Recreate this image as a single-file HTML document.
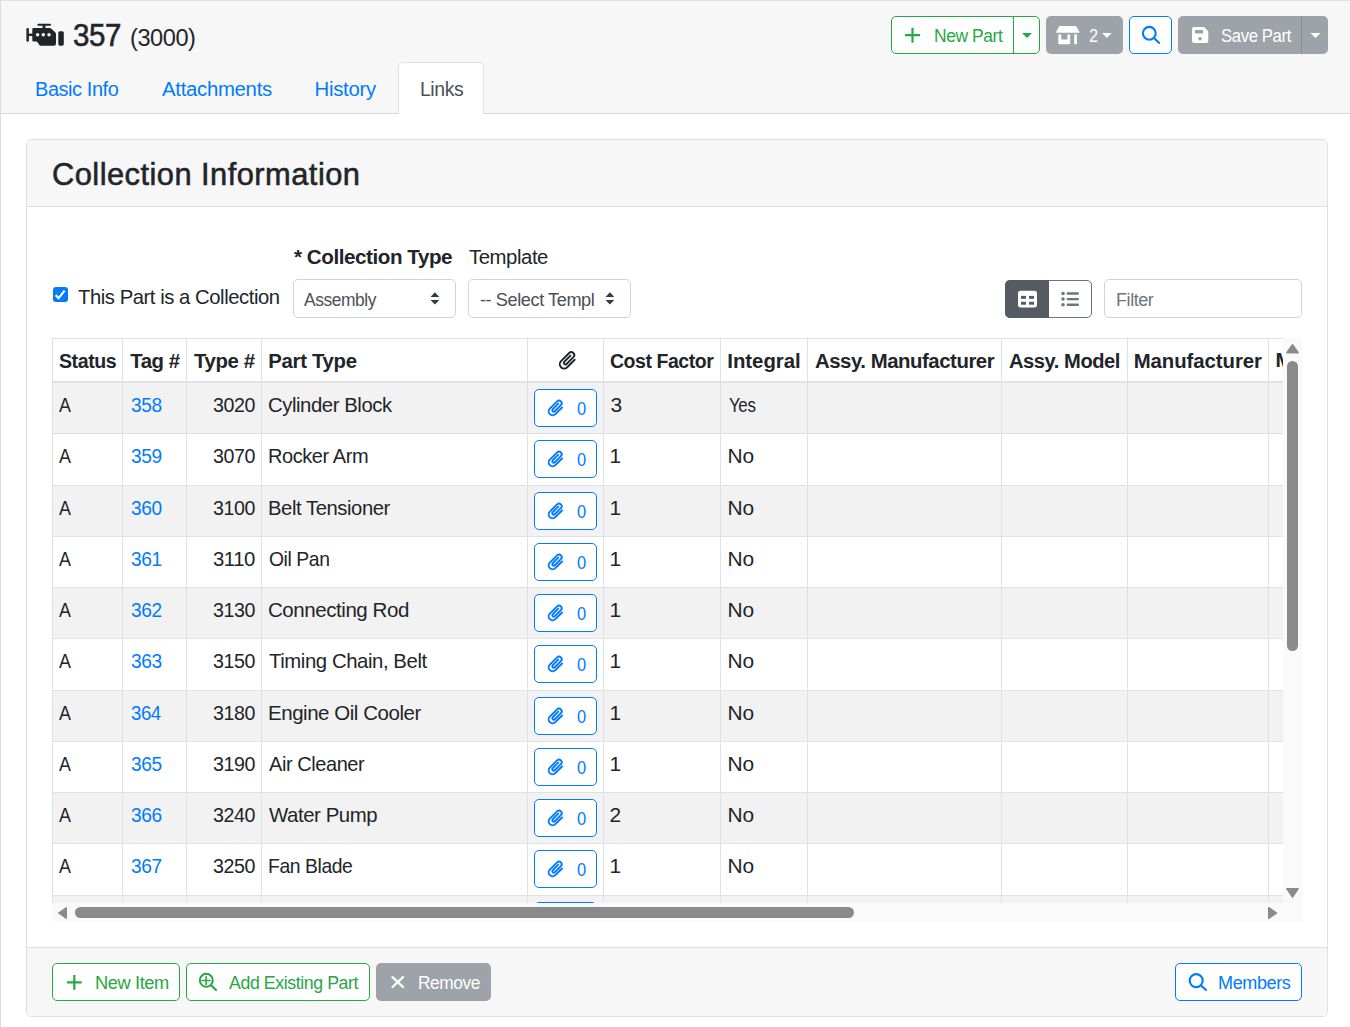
<!DOCTYPE html>
<html><head><meta charset="utf-8"><title>Links</title>
<style>
html,body{margin:0;padding:0}
body{width:1350px;height:1027px;position:relative;overflow:hidden;background:#fff;font-family:"Liberation Sans",sans-serif;color:#212529}
.a{position:absolute;box-sizing:border-box}
.t{position:absolute;white-space:pre;font-family:"Liberation Sans",sans-serif;transform-origin:0 0}
svg.a{overflow:visible}
</style></head><body>
<div class="a" style="left:0px;top:0px;width:1350px;height:114px;background:#f7f7f7"></div>
<div class="a" style="left:0px;top:0px;width:1350px;height:1px;background:#dee2e6"></div>
<div class="a" style="left:0px;top:0px;width:1px;height:1027px;background:#dcdde0"></div>
<div class="a" style="left:1px;top:113px;width:1349px;height:1px;background:#d8d8d8"></div>
<div class="a" style="left:398px;top:62px;width:86px;height:52px;background:#fff;border:1px solid #dee2e6;border-bottom:0;border-radius:5px 5px 0 0"></div>
<div class="a" style="left:891px;top:16px;width:149px;height:38px;background:#fff;border:1px solid #28a745;border-radius:5px"></div>
<div class="a" style="left:1013px;top:16px;width:1px;height:38px;background:#28a745"></div>
<div class="a" style="left:1046px;top:16px;width:77px;height:38px;background:#9da3a9;border-radius:5px"></div>
<div class="a" style="left:1129px;top:16px;width:43px;height:38px;background:#fff;border:1px solid #007bff;border-radius:5px"></div>
<div class="a" style="left:1178px;top:16px;width:150px;height:38px;background:#9da3a9;border-radius:5px"></div>
<div class="a" style="left:1301px;top:16px;width:1px;height:38px;background:#868c93"></div>
<div class="a" style="left:26px;top:139px;width:1302px;height:878px;background:#fff;border:1px solid #dfdfdf;border-radius:5px"></div>
<div class="a" style="left:27px;top:140px;width:1300px;height:66px;background:#f7f7f7;border-radius:4px 4px 0 0"></div>
<div class="a" style="left:27px;top:206px;width:1300px;height:1px;background:#dfdfdf"></div>
<div class="a" style="left:27px;top:947px;width:1300px;height:1px;background:#dfdfdf"></div>
<div class="a" style="left:27px;top:948px;width:1300px;height:68px;background:#f7f7f7;border-radius:0 0 4px 4px"></div>
<div class="a" style="left:53px;top:287px;width:15px;height:15px;background:#007bff;border-radius:3px"></div>
<div class="a" style="left:293px;top:279px;width:163px;height:39px;background:#fff;border:1px solid #ced4da;border-radius:5px"></div>
<div class="a" style="left:468px;top:279px;width:163px;height:39px;background:#fff;border:1px solid #ced4da;border-radius:5px"></div>
<div class="a" style="left:1005px;top:280px;width:87px;height:38px;background:#fff;border:1px solid #6c757d;border-radius:5px"></div>
<div class="a" style="left:1005px;top:280px;width:44px;height:38px;background:#545b62;border-radius:5px 0 0 5px"></div>
<div class="a" style="left:1104px;top:279px;width:198px;height:39px;background:#fff;border:1px solid #ced4da;border-radius:5px"></div>
<div class="a" style="left:53px;top:383px;width:1230px;height:50px;background:#f2f2f2"></div>
<div class="a" style="left:53px;top:486px;width:1230px;height:50px;background:#f2f2f2"></div>
<div class="a" style="left:53px;top:588px;width:1230px;height:50px;background:#f2f2f2"></div>
<div class="a" style="left:53px;top:691px;width:1230px;height:50px;background:#f2f2f2"></div>
<div class="a" style="left:53px;top:793px;width:1230px;height:50px;background:#f2f2f2"></div>
<div class="a" style="left:53px;top:896px;width:1230px;height:7px;background:#f2f2f2"></div>
<div class="a" style="left:52px;top:338px;width:1231px;height:1px;background:#dee2e6"></div>
<div class="a" style="left:52px;top:381px;width:1231px;height:2px;background:#dee2e6"></div>
<div class="a" style="left:52px;top:433px;width:1231px;height:1px;background:#dee2e6"></div>
<div class="a" style="left:52px;top:485px;width:1231px;height:1px;background:#dee2e6"></div>
<div class="a" style="left:52px;top:536px;width:1231px;height:1px;background:#dee2e6"></div>
<div class="a" style="left:52px;top:587px;width:1231px;height:1px;background:#dee2e6"></div>
<div class="a" style="left:52px;top:638px;width:1231px;height:1px;background:#dee2e6"></div>
<div class="a" style="left:52px;top:690px;width:1231px;height:1px;background:#dee2e6"></div>
<div class="a" style="left:52px;top:741px;width:1231px;height:1px;background:#dee2e6"></div>
<div class="a" style="left:52px;top:792px;width:1231px;height:1px;background:#dee2e6"></div>
<div class="a" style="left:52px;top:843px;width:1231px;height:1px;background:#dee2e6"></div>
<div class="a" style="left:52px;top:895px;width:1231px;height:1px;background:#dee2e6"></div>
<div class="a" style="left:52px;top:338px;width:1px;height:565px;background:#dee2e6"></div>
<div class="a" style="left:122px;top:338px;width:1px;height:565px;background:#dee2e6"></div>
<div class="a" style="left:186px;top:338px;width:1px;height:565px;background:#dee2e6"></div>
<div class="a" style="left:261px;top:338px;width:1px;height:565px;background:#dee2e6"></div>
<div class="a" style="left:527px;top:338px;width:1px;height:565px;background:#dee2e6"></div>
<div class="a" style="left:603px;top:338px;width:1px;height:565px;background:#dee2e6"></div>
<div class="a" style="left:720px;top:338px;width:1px;height:565px;background:#dee2e6"></div>
<div class="a" style="left:807px;top:338px;width:1px;height:565px;background:#dee2e6"></div>
<div class="a" style="left:1001px;top:338px;width:1px;height:565px;background:#dee2e6"></div>
<div class="a" style="left:1127px;top:338px;width:1px;height:565px;background:#dee2e6"></div>
<div class="a" style="left:1268px;top:338px;width:1px;height:565px;background:#dee2e6"></div>
<div class="a" style="left:534px;top:389px;width:63px;height:38px;background:#fff;border:1px solid #007bff;border-radius:5px"></div>
<div class="a" style="left:534px;top:440px;width:63px;height:38px;background:#fff;border:1px solid #007bff;border-radius:5px"></div>
<div class="a" style="left:534px;top:492px;width:63px;height:38px;background:#fff;border:1px solid #007bff;border-radius:5px"></div>
<div class="a" style="left:534px;top:543px;width:63px;height:38px;background:#fff;border:1px solid #007bff;border-radius:5px"></div>
<div class="a" style="left:534px;top:594px;width:63px;height:38px;background:#fff;border:1px solid #007bff;border-radius:5px"></div>
<div class="a" style="left:534px;top:645px;width:63px;height:38px;background:#fff;border:1px solid #007bff;border-radius:5px"></div>
<div class="a" style="left:534px;top:697px;width:63px;height:38px;background:#fff;border:1px solid #007bff;border-radius:5px"></div>
<div class="a" style="left:534px;top:748px;width:63px;height:38px;background:#fff;border:1px solid #007bff;border-radius:5px"></div>
<div class="a" style="left:534px;top:799px;width:63px;height:38px;background:#fff;border:1px solid #007bff;border-radius:5px"></div>
<div class="a" style="left:534px;top:850px;width:63px;height:38px;background:#fff;border:1px solid #007bff;border-radius:5px"></div>
<div class="a" style="left:534px;top:902px;width:63px;height:1px;overflow:hidden"><div class="a" style="left:0px;top:0px;width:63px;height:38px;background:#fff;border:1px solid #007bff;border-radius:5px"></div></div>
<div class="a" style="left:1283px;top:338px;width:19px;height:565px;background:#fafafa"></div>
<div class="a" style="left:52px;top:903px;width:1231px;height:19px;background:#fafafa"></div>
<div class="a" style="left:1283px;top:903px;width:19px;height:19px;background:#fafafa"></div>
<div class="a" style="left:1287px;top:361px;width:11px;height:290px;background:#8a8a8a;border-radius:6px"></div>
<div class="a" style="left:75px;top:907px;width:779px;height:11px;background:#8a8a8a;border-radius:6px"></div>
<div class="a" style="left:52px;top:963px;width:128px;height:38px;background:#fff;border:1px solid #28a745;border-radius:5px"></div>
<div class="a" style="left:186px;top:963px;width:184px;height:38px;background:#fff;border:1px solid #28a745;border-radius:5px"></div>
<div class="a" style="left:376px;top:963px;width:115px;height:38px;background:#9da3a9;border-radius:5px"></div>
<div class="a" style="left:1175px;top:963px;width:127px;height:38px;background:#fff;border:1px solid #007bff;border-radius:5px"></div>
<svg class="a" style="left:0;top:0" width="1350" height="1027" viewBox="0 0 1350 1027"><g fill="#212529"><rect x="37.3" y="23.7" width="13.7" height="2" rx="1"/><rect x="42.6" y="25" width="2.9" height="3.5"/><path d="M33.5 28.1 H49.6 Q50.6 28.1 51.4 28.8 L55.2 32.2 Q56 33 56 34.2 V43.5 Q56 45.7 53.8 45.7 H40.4 Q39.8 45.7 39.4 45.1 L36.9 41.5 H33.5 Q32.3 41.5 32.3 40.3 V29.3 Q32.3 28.1 33.5 28.1Z"/><rect x="26.4" y="28" width="2.5" height="13.8" rx="1.2"/><rect x="28" y="33.6" width="5" height="2.4"/><rect x="58.3" y="31.2" width="5.5" height="14.5" rx="1.6"/></g><g fill="#f7f7f7"><circle cx="37.6" cy="34.7" r="1.75"/><circle cx="43.3" cy="34.7" r="1.75"/><circle cx="49" cy="34.7" r="1.75"/></g><g stroke="#28a745" stroke-width="2.2"><path d="M905 35.2H920M912.5 27.7V42.7"/></g><path d="M1022 33H1032L1027 38Z" fill="#28a745"/><g fill="#fff"><path d="M1060 26H1075.2Q1075.9 26 1076.3 26.6L1079.5 32Q1079.8 32.8 1079 32.8H1056.6Q1055.8 32.8 1056.1 32L1059 26.6Q1059.4 26 1060 26Z"/><path d="M1058.3 34.4H1061.3V39.4H1067.4V34.4H1070.2V43.2Q1070.2 44.2 1069.2 44.2H1059.3Q1058.3 44.2 1058.3 43.2Z"/><rect x="1074.2" y="34.4" width="2.8" height="9.8"/><path d="M1102.1 33.1H1111.7L1106.9 37.9Z"/></g><g stroke="#007bff" fill="none" stroke-width="2.1" stroke-linecap="round"><circle cx="1149.3" cy="33.3" r="6.4"/><path d="M1154 38L1159.2 42.9"/></g><path fill="#fff" fill-rule="evenodd" d="M1194 27H1204.1L1208.3 31.2V41.1Q1208.3 43.1 1206.3 43.1H1194Q1192 43.1 1192 41.1V29Q1192 27 1194 27Z M1195 30H1203V33.6H1195Z M1201.8 38.7A1.8 1.8 0 1 0 1198.2 38.7A1.8 1.8 0 1 0 1201.8 38.7Z"/><path d="M1310.5 33H1320.5L1315.5 38Z" fill="#fff"/><path d="M55.6 295.1L58.6 298.1L64.6 290.6" stroke="#fff" stroke-width="2.2" fill="none"/><path fill="#343a40" d="M430.5 297H439.3L434.9 292.3Z M430.5 299.9H439.3L434.9 304.5Z"/><path fill="#343a40" d="M605.5 297H614.3L609.9 292.3Z M605.5 299.9H614.3L609.9 304.5Z"/><rect x="1018" y="290.8" width="19" height="16.6" rx="2.6" fill="#fff"/><g fill="#545b62"><rect x="1021" y="295.9" width="5" height="2.9"/><rect x="1029" y="295.9" width="5" height="2.9"/><rect x="1021" y="301.8" width="5" height="2.9"/><rect x="1029" y="301.8" width="5" height="2.9"/></g><g fill="#6c757d"><circle cx="1063" cy="293.5" r="1.75"/><circle cx="1063" cy="299.1" r="1.75"/><circle cx="1063" cy="304.7" r="1.75"/><rect x="1066.6" y="292.3" width="12.4" height="2.4" rx="1.2"/><rect x="1066.6" y="297.9" width="12.4" height="2.4" rx="1.2"/><rect x="1066.6" y="303.5" width="12.4" height="2.4" rx="1.2"/></g><path fill="none" stroke="#212529" stroke-width="2.073" stroke-linecap="round" transform="translate(567.7 360.6) rotate(45) scale(0.9167) translate(-12.5 -12)" d="M17.25,6V17.5A4.75,4.75 0 0 1 7.75,17.5V5A3.25,3.25 0 0 1 14.25,5V15.5A1.75,1.75 0 0 1 10.75,15.5V6"/><path fill="none" stroke="#007bff" stroke-width="2.303" stroke-linecap="round" transform="translate(555.8 408.2) rotate(45) scale(0.8250) translate(-12.5 -12)" d="M17.25,6V17.5A4.75,4.75 0 0 1 7.75,17.5V5A3.25,3.25 0 0 1 14.25,5V15.5A1.75,1.75 0 0 1 10.75,15.5V6"/><path fill="none" stroke="#007bff" stroke-width="2.303" stroke-linecap="round" transform="translate(555.8 459.2) rotate(45) scale(0.8250) translate(-12.5 -12)" d="M17.25,6V17.5A4.75,4.75 0 0 1 7.75,17.5V5A3.25,3.25 0 0 1 14.25,5V15.5A1.75,1.75 0 0 1 10.75,15.5V6"/><path fill="none" stroke="#007bff" stroke-width="2.303" stroke-linecap="round" transform="translate(555.8 511.2) rotate(45) scale(0.8250) translate(-12.5 -12)" d="M17.25,6V17.5A4.75,4.75 0 0 1 7.75,17.5V5A3.25,3.25 0 0 1 14.25,5V15.5A1.75,1.75 0 0 1 10.75,15.5V6"/><path fill="none" stroke="#007bff" stroke-width="2.303" stroke-linecap="round" transform="translate(555.8 562.2) rotate(45) scale(0.8250) translate(-12.5 -12)" d="M17.25,6V17.5A4.75,4.75 0 0 1 7.75,17.5V5A3.25,3.25 0 0 1 14.25,5V15.5A1.75,1.75 0 0 1 10.75,15.5V6"/><path fill="none" stroke="#007bff" stroke-width="2.303" stroke-linecap="round" transform="translate(555.8 613.2) rotate(45) scale(0.8250) translate(-12.5 -12)" d="M17.25,6V17.5A4.75,4.75 0 0 1 7.75,17.5V5A3.25,3.25 0 0 1 14.25,5V15.5A1.75,1.75 0 0 1 10.75,15.5V6"/><path fill="none" stroke="#007bff" stroke-width="2.303" stroke-linecap="round" transform="translate(555.8 664.2) rotate(45) scale(0.8250) translate(-12.5 -12)" d="M17.25,6V17.5A4.75,4.75 0 0 1 7.75,17.5V5A3.25,3.25 0 0 1 14.25,5V15.5A1.75,1.75 0 0 1 10.75,15.5V6"/><path fill="none" stroke="#007bff" stroke-width="2.303" stroke-linecap="round" transform="translate(555.8 716.2) rotate(45) scale(0.8250) translate(-12.5 -12)" d="M17.25,6V17.5A4.75,4.75 0 0 1 7.75,17.5V5A3.25,3.25 0 0 1 14.25,5V15.5A1.75,1.75 0 0 1 10.75,15.5V6"/><path fill="none" stroke="#007bff" stroke-width="2.303" stroke-linecap="round" transform="translate(555.8 767.2) rotate(45) scale(0.8250) translate(-12.5 -12)" d="M17.25,6V17.5A4.75,4.75 0 0 1 7.75,17.5V5A3.25,3.25 0 0 1 14.25,5V15.5A1.75,1.75 0 0 1 10.75,15.5V6"/><path fill="none" stroke="#007bff" stroke-width="2.303" stroke-linecap="round" transform="translate(555.8 818.2) rotate(45) scale(0.8250) translate(-12.5 -12)" d="M17.25,6V17.5A4.75,4.75 0 0 1 7.75,17.5V5A3.25,3.25 0 0 1 14.25,5V15.5A1.75,1.75 0 0 1 10.75,15.5V6"/><path fill="none" stroke="#007bff" stroke-width="2.303" stroke-linecap="round" transform="translate(555.8 869.2) rotate(45) scale(0.8250) translate(-12.5 -12)" d="M17.25,6V17.5A4.75,4.75 0 0 1 7.75,17.5V5A3.25,3.25 0 0 1 14.25,5V15.5A1.75,1.75 0 0 1 10.75,15.5V6"/><g fill="#8a8a8a" stroke="#8a8a8a" stroke-width="1.4" stroke-linejoin="round"><path d="M1286.8 352.7H1298.2L1292.5 344.7Z"/><path d="M1286.8 888.7H1298.2L1292.5 897.2Z"/><path d="M66.3 907.7V918.3L58.7 913Z"/><path d="M1268.7 907.7V918.3L1276.6 913Z"/></g><g stroke="#28a745" stroke-width="2.2"><path d="M67 982.4H81.7M74.35 975V989.7"/></g><g stroke="#28a745" fill="none" stroke-linecap="round"><circle cx="206.3" cy="980.3" r="6.5" stroke-width="2"/><path d="M202 980.5H210.2M206.1 976.7V984.5" stroke-width="1.6"/><path d="M211.2 985.5L216 990" stroke-width="2.2"/></g><g stroke="#fff" stroke-width="2.3" stroke-linecap="round"><path d="M392.5 977.1L403 987M403 977.1L392.5 987"/></g><g stroke="#007bff" fill="none" stroke-width="2.1" stroke-linecap="round"><circle cx="1196.2" cy="980.6" r="6.5"/><path d="M1201 985.4L1206 990"/></g></svg>
<div class="t" style="left:72.53px;top:16.00px;font-size:30.52px;line-height:39px;letter-spacing:-0.450px;transform:scaleX(0.9679);-webkit-text-stroke:0.55px #212529">357</div>
<div class="t" style="left:130.02px;top:22.50px;font-size:23.98px;line-height:30px;letter-spacing:-0.450px;transform:scaleX(0.9838)">(3000)</div>
<div class="t" style="left:35.02px;top:76.00px;font-size:20.35px;line-height:26px;letter-spacing:-0.450px;transform:scaleX(0.9825);color:#007bff">Basic Info</div>
<div class="t" style="left:162.00px;top:76.00px;font-size:20.35px;line-height:26px;letter-spacing:-0.290px;color:#007bff">Attachments</div>
<div class="t" style="left:314.50px;top:76.00px;font-size:20.35px;line-height:26px;letter-spacing:-0.271px;color:#007bff">History</div>
<div class="t" style="left:419.55px;top:76.00px;font-size:20.35px;line-height:26px;letter-spacing:-0.450px;transform:scaleX(0.9546);color:#495057">Links</div>
<div class="t" style="left:933.58px;top:24.00px;font-size:18.9px;line-height:24px;letter-spacing:-0.450px;transform:scaleX(0.9221);color:#28a745">New Part</div>
<div class="t" style="left:1089.00px;top:24.20px;font-size:18.9px;line-height:24px;transform:scaleX(0.8600);color:#ffffff">2</div>
<div class="t" style="left:1221.00px;top:24.00px;font-size:18.9px;line-height:24px;letter-spacing:-0.450px;transform:scaleX(0.8864);color:#ffffff">Save Part</div>
<div class="t" style="left:51.99px;top:155.00px;font-size:30.52px;line-height:39px;letter-spacing:0.450px;transform:scaleX(1.0112);-webkit-text-stroke:0.55px #212529">Collection Information</div>
<div class="t" style="left:78.00px;top:283.50px;font-size:20.78px;line-height:26px;letter-spacing:-0.450px;transform:scaleX(0.9745)">This Part is a Collection</div>
<div class="t" style="left:294.00px;top:244.00px;font-size:20.78px;line-height:26px;letter-spacing:-0.450px;transform:scaleX(0.9927);font-weight:bold">* Collection Type</div>
<div class="t" style="left:469.00px;top:244.00px;font-size:20.35px;line-height:26px;letter-spacing:-0.450px">Template</div>
<div class="t" style="left:304.00px;top:288.00px;font-size:18.9px;line-height:24px;letter-spacing:-0.450px;transform:scaleX(0.9207);color:#495057">Assembly</div>
<div class="t" style="left:480.00px;top:288.00px;font-size:18.9px;line-height:24px;letter-spacing:-0.450px;transform:scaleX(0.9622);color:#495057">-- Select Templ</div>
<div class="t" style="left:1115.75px;top:288.00px;font-size:18.9px;line-height:24px;letter-spacing:-0.450px;transform:scaleX(0.9522);color:#6c757d">Filter</div>
<div class="t" style="left:59.00px;top:348.00px;font-size:20.35px;line-height:26px;letter-spacing:-0.450px;transform:scaleX(0.9613);font-weight:bold">Status</div>
<div class="t" style="left:130.20px;top:348.00px;font-size:20.35px;line-height:26px;letter-spacing:-0.427px;font-weight:bold">Tag #</div>
<div class="t" style="left:194.00px;top:348.00px;font-size:20.35px;line-height:26px;letter-spacing:-0.365px;font-weight:bold">Type #</div>
<div class="t" style="left:268.30px;top:348.00px;font-size:20.35px;line-height:26px;letter-spacing:-0.311px;font-weight:bold">Part Type</div>
<div class="t" style="left:610.30px;top:348.00px;font-size:20.35px;line-height:26px;letter-spacing:-0.450px;transform:scaleX(0.9566);font-weight:bold">Cost Factor</div>
<div class="t" style="left:727.30px;top:348.00px;font-size:20.35px;line-height:26px;letter-spacing:-0.018px;font-weight:bold">Integral</div>
<div class="t" style="left:815.00px;top:348.00px;font-size:20.35px;line-height:26px;letter-spacing:-0.450px;font-weight:bold">Assy. Manufacturer</div>
<div class="t" style="left:1009.20px;top:348.00px;font-size:20.35px;line-height:26px;letter-spacing:-0.450px;transform:scaleX(0.9889);font-weight:bold">Assy. Model</div>
<div class="t" style="left:1133.70px;top:348.00px;font-size:20.35px;line-height:26px;letter-spacing:-0.059px;font-weight:bold">Manufacturer</div>
<div class="t" style="left:59.00px;top:391.00px;font-size:20.93px;line-height:27px;transform:scaleX(0.8571)">A</div>
<div class="t" style="left:131.30px;top:391.00px;font-size:20.93px;line-height:27px;letter-spacing:-0.450px;transform:scaleX(0.9140);color:#007bff">358</div>
<div class="t" style="left:213.00px;top:391.00px;font-size:20.93px;line-height:27px;letter-spacing:-0.450px;transform:scaleX(0.9381)">3020</div>
<div class="t" style="left:268.03px;top:391.00px;font-size:20.93px;line-height:27px;letter-spacing:-0.450px;transform:scaleX(0.9709)">Cylinder Block</div>
<div class="t" style="left:576.80px;top:397.00px;font-size:18.9px;line-height:24px;transform:scaleX(0.8700);color:#007bff">0</div>
<div class="t" style="left:610.50px;top:391.00px;font-size:20.93px;line-height:27px">3</div>
<div class="t" style="left:728.50px;top:391.00px;font-size:20.93px;line-height:27px;letter-spacing:-0.450px;transform:scaleX(0.8087)">Yes</div>
<div class="t" style="left:59.00px;top:442.30px;font-size:20.93px;line-height:27px;transform:scaleX(0.8571)">A</div>
<div class="t" style="left:131.30px;top:442.30px;font-size:20.93px;line-height:27px;letter-spacing:-0.450px;transform:scaleX(0.9140);color:#007bff">359</div>
<div class="t" style="left:213.00px;top:442.30px;font-size:20.93px;line-height:27px;letter-spacing:-0.450px;transform:scaleX(0.9381)">3070</div>
<div class="t" style="left:268.04px;top:442.30px;font-size:20.93px;line-height:27px;letter-spacing:-0.450px;transform:scaleX(0.9557)">Rocker Arm</div>
<div class="t" style="left:576.80px;top:448.30px;font-size:18.9px;line-height:24px;transform:scaleX(0.8700);color:#007bff">0</div>
<div class="t" style="left:609.50px;top:442.30px;font-size:20.93px;line-height:27px">1</div>
<div class="t" style="left:727.50px;top:442.30px;font-size:20.93px;line-height:27px;letter-spacing:-0.009px">No</div>
<div class="t" style="left:59.00px;top:494.00px;font-size:20.93px;line-height:27px;transform:scaleX(0.8571)">A</div>
<div class="t" style="left:131.30px;top:494.00px;font-size:20.93px;line-height:27px;letter-spacing:-0.450px;transform:scaleX(0.9140);color:#007bff">360</div>
<div class="t" style="left:213.00px;top:494.00px;font-size:20.93px;line-height:27px;letter-spacing:-0.450px;transform:scaleX(0.9381)">3100</div>
<div class="t" style="left:268.03px;top:494.00px;font-size:20.93px;line-height:27px;letter-spacing:-0.450px;transform:scaleX(0.9677)">Belt Tensioner</div>
<div class="t" style="left:576.80px;top:500.00px;font-size:18.9px;line-height:24px;transform:scaleX(0.8700);color:#007bff">0</div>
<div class="t" style="left:609.50px;top:494.00px;font-size:20.93px;line-height:27px">1</div>
<div class="t" style="left:727.50px;top:494.00px;font-size:20.93px;line-height:27px;letter-spacing:-0.009px">No</div>
<div class="t" style="left:59.00px;top:545.00px;font-size:20.93px;line-height:27px;transform:scaleX(0.8571)">A</div>
<div class="t" style="left:131.30px;top:545.00px;font-size:20.93px;line-height:27px;letter-spacing:-0.450px;transform:scaleX(0.9140);color:#007bff">361</div>
<div class="t" style="left:213.00px;top:545.00px;font-size:20.93px;line-height:27px;letter-spacing:-0.450px;transform:scaleX(0.9720)">3110</div>
<div class="t" style="left:269.00px;top:545.00px;font-size:20.93px;line-height:27px;letter-spacing:-0.450px;transform:scaleX(0.9238)">Oil Pan</div>
<div class="t" style="left:576.80px;top:551.00px;font-size:18.9px;line-height:24px;transform:scaleX(0.8700);color:#007bff">0</div>
<div class="t" style="left:609.50px;top:545.00px;font-size:20.93px;line-height:27px">1</div>
<div class="t" style="left:727.50px;top:545.00px;font-size:20.93px;line-height:27px;letter-spacing:-0.009px">No</div>
<div class="t" style="left:59.00px;top:596.00px;font-size:20.93px;line-height:27px;transform:scaleX(0.8571)">A</div>
<div class="t" style="left:131.30px;top:596.00px;font-size:20.93px;line-height:27px;letter-spacing:-0.450px;transform:scaleX(0.9140);color:#007bff">362</div>
<div class="t" style="left:213.00px;top:596.00px;font-size:20.93px;line-height:27px;letter-spacing:-0.450px;transform:scaleX(0.9381)">3130</div>
<div class="t" style="left:268.02px;top:596.00px;font-size:20.93px;line-height:27px;letter-spacing:-0.450px;transform:scaleX(0.9800)">Connecting Rod</div>
<div class="t" style="left:576.80px;top:602.00px;font-size:18.9px;line-height:24px;transform:scaleX(0.8700);color:#007bff">0</div>
<div class="t" style="left:609.50px;top:596.00px;font-size:20.93px;line-height:27px">1</div>
<div class="t" style="left:727.50px;top:596.00px;font-size:20.93px;line-height:27px;letter-spacing:-0.009px">No</div>
<div class="t" style="left:59.00px;top:647.00px;font-size:20.93px;line-height:27px;transform:scaleX(0.8571)">A</div>
<div class="t" style="left:131.30px;top:647.00px;font-size:20.93px;line-height:27px;letter-spacing:-0.450px;transform:scaleX(0.9140);color:#007bff">363</div>
<div class="t" style="left:213.00px;top:647.00px;font-size:20.93px;line-height:27px;letter-spacing:-0.450px;transform:scaleX(0.9381)">3150</div>
<div class="t" style="left:269.00px;top:647.00px;font-size:20.93px;line-height:27px;letter-spacing:-0.450px;transform:scaleX(0.9730)">Timing Chain, Belt</div>
<div class="t" style="left:576.80px;top:653.00px;font-size:18.9px;line-height:24px;transform:scaleX(0.8700);color:#007bff">0</div>
<div class="t" style="left:609.50px;top:647.00px;font-size:20.93px;line-height:27px">1</div>
<div class="t" style="left:727.50px;top:647.00px;font-size:20.93px;line-height:27px;letter-spacing:-0.009px">No</div>
<div class="t" style="left:59.00px;top:699.00px;font-size:20.93px;line-height:27px;transform:scaleX(0.8571)">A</div>
<div class="t" style="left:131.30px;top:699.00px;font-size:20.93px;line-height:27px;letter-spacing:-0.450px;transform:scaleX(0.8874);color:#007bff">364</div>
<div class="t" style="left:213.00px;top:699.00px;font-size:20.93px;line-height:27px;letter-spacing:-0.450px;transform:scaleX(0.9381)">3180</div>
<div class="t" style="left:268.02px;top:699.00px;font-size:20.93px;line-height:27px;letter-spacing:-0.450px;transform:scaleX(0.9775)">Engine Oil Cooler</div>
<div class="t" style="left:576.80px;top:705.00px;font-size:18.9px;line-height:24px;transform:scaleX(0.8700);color:#007bff">0</div>
<div class="t" style="left:609.50px;top:699.00px;font-size:20.93px;line-height:27px">1</div>
<div class="t" style="left:727.50px;top:699.00px;font-size:20.93px;line-height:27px;letter-spacing:-0.009px">No</div>
<div class="t" style="left:59.00px;top:750.00px;font-size:20.93px;line-height:27px;transform:scaleX(0.8571)">A</div>
<div class="t" style="left:131.30px;top:750.00px;font-size:20.93px;line-height:27px;letter-spacing:-0.450px;transform:scaleX(0.9140);color:#007bff">365</div>
<div class="t" style="left:213.00px;top:750.00px;font-size:20.93px;line-height:27px;letter-spacing:-0.450px;transform:scaleX(0.9381)">3190</div>
<div class="t" style="left:269.00px;top:750.00px;font-size:20.93px;line-height:27px;letter-spacing:-0.450px;transform:scaleX(0.9553)">Air Cleaner</div>
<div class="t" style="left:576.80px;top:756.00px;font-size:18.9px;line-height:24px;transform:scaleX(0.8700);color:#007bff">0</div>
<div class="t" style="left:609.50px;top:750.00px;font-size:20.93px;line-height:27px">1</div>
<div class="t" style="left:727.50px;top:750.00px;font-size:20.93px;line-height:27px;letter-spacing:-0.009px">No</div>
<div class="t" style="left:59.00px;top:801.00px;font-size:20.93px;line-height:27px;transform:scaleX(0.8571)">A</div>
<div class="t" style="left:131.30px;top:801.00px;font-size:20.93px;line-height:27px;letter-spacing:-0.450px;transform:scaleX(0.9140);color:#007bff">366</div>
<div class="t" style="left:213.00px;top:801.00px;font-size:20.93px;line-height:27px;letter-spacing:-0.450px;transform:scaleX(0.9381)">3240</div>
<div class="t" style="left:269.00px;top:801.00px;font-size:20.93px;line-height:27px;letter-spacing:-0.450px;transform:scaleX(0.9747)">Water Pump</div>
<div class="t" style="left:576.80px;top:807.00px;font-size:18.9px;line-height:24px;transform:scaleX(0.8700);color:#007bff">0</div>
<div class="t" style="left:609.50px;top:801.00px;font-size:20.93px;line-height:27px">2</div>
<div class="t" style="left:727.50px;top:801.00px;font-size:20.93px;line-height:27px;letter-spacing:-0.009px">No</div>
<div class="t" style="left:59.00px;top:852.00px;font-size:20.93px;line-height:27px;transform:scaleX(0.8571)">A</div>
<div class="t" style="left:131.30px;top:852.00px;font-size:20.93px;line-height:27px;letter-spacing:-0.450px;transform:scaleX(0.9140);color:#007bff">367</div>
<div class="t" style="left:213.00px;top:852.00px;font-size:20.93px;line-height:27px;letter-spacing:-0.450px;transform:scaleX(0.9381)">3250</div>
<div class="t" style="left:268.08px;top:852.00px;font-size:20.93px;line-height:27px;letter-spacing:-0.450px;transform:scaleX(0.9241)">Fan Blade</div>
<div class="t" style="left:576.80px;top:858.00px;font-size:18.9px;line-height:24px;transform:scaleX(0.8700);color:#007bff">0</div>
<div class="t" style="left:609.50px;top:852.00px;font-size:20.93px;line-height:27px">1</div>
<div class="t" style="left:727.50px;top:852.00px;font-size:20.93px;line-height:27px;letter-spacing:-0.009px">No</div>
<div class="t" style="left:95.03px;top:971.00px;font-size:18.9px;line-height:24px;letter-spacing:-0.450px;transform:scaleX(0.9694);color:#28a745">New Item</div>
<div class="t" style="left:229.00px;top:971.00px;font-size:18.9px;line-height:24px;letter-spacing:-0.450px;transform:scaleX(0.9404);color:#28a745">Add Existing Part</div>
<div class="t" style="left:418.08px;top:971.00px;font-size:18.9px;line-height:24px;letter-spacing:-0.450px;transform:scaleX(0.9161);color:#ffffff">Remove</div>
<div class="t" style="left:1218.04px;top:971.00px;font-size:18.9px;line-height:24px;letter-spacing:-0.450px;transform:scaleX(0.9573);color:#007bff">Members</div>
<div class="a" style="left:1269px;top:339px;width:14px;height:42px;overflow:hidden"><div class="t" style="left:6.5px;top:8px;font-size:20.35px;line-height:26px;font-weight:bold">M</div></div>
</body></html>
